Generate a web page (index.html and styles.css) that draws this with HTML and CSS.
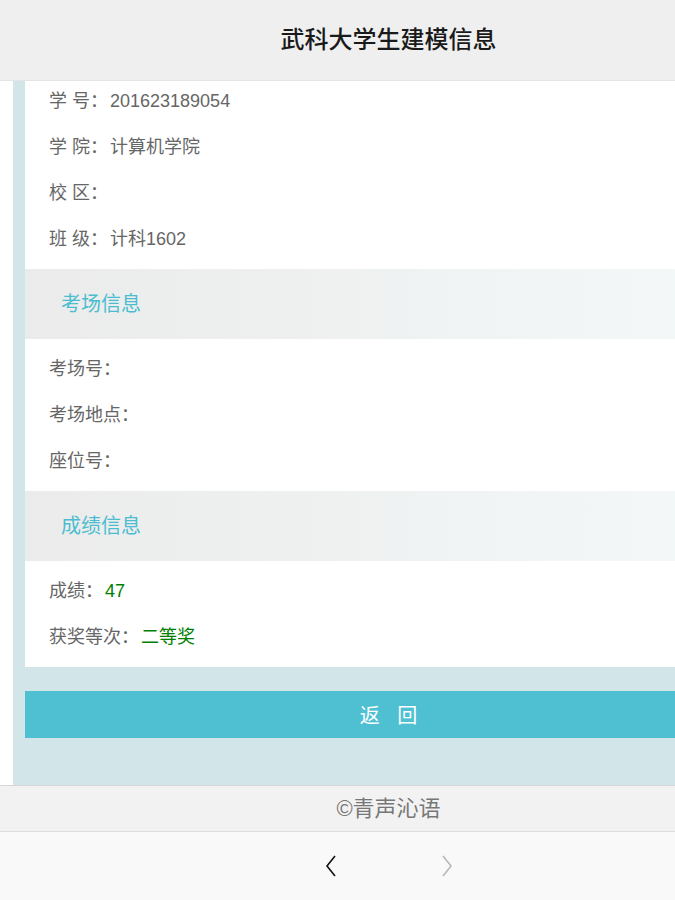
FILE: index.html
```html
<!DOCTYPE html>
<html lang="zh-CN">
<head>
    <meta charset="UTF-8">
    <meta name="viewport" content="width=device-width, initial-scale=1.0">
    <title>武科大学生建模信息</title>
    <link rel="stylesheet" href="styles.css">
</head>
<body>

    <div class="page">
        <!-- Fixed top bar -->
        <header class="top-bar">武科大学生建模信息</header>

        <div class="main">
            <div class="card">
                <div class="group">
                    <div class="row"><span class="label">学 号：</span>201623189054</div>
                    <div class="row"><span class="label">学 院：</span>计算机学院</div>
                    <div class="row"><span class="label">校 区：</span></div>
                    <div class="row"><span class="label">班 级：</span>计科1602</div>
                </div>

                <div class="section-title">考场信息</div>
                <div class="group">
                    <div class="row"><span class="label">考场号：</span></div>
                    <div class="row"><span class="label">考场地点：</span></div>
                    <div class="row"><span class="label">座位号：</span></div>
                </div>

                <div class="section-title">成绩信息</div>
                <div class="group">
                    <div class="row"><span class="label">成绩：</span><span class="good">47</span></div>
                    <div class="row"><span class="label">获奖等次：</span><span class="good">二等奖</span></div>
                </div>
            </div>

            <button class="back-btn" type="button">返 回</button>
        </div>

        <footer class="footer">©青声沁语</footer>

        <!-- Browser toolbar -->
        <div class="nav-bar">
            <svg class="nav-arrow" width="12" height="22" viewBox="0 0 12 22">
                <polyline points="10,1 2,11 10,21" fill="none" stroke="#111" stroke-width="1.6"/>
            </svg>
            <svg class="nav-arrow" width="12" height="22" viewBox="0 0 12 22">
                <polyline points="2,1 10,11 2,21" fill="none" stroke="#b8b8bc" stroke-width="1.6"/>
            </svg>
        </div>
    </div>

</body>
</html>
```

FILE: styles.css
```css
html, body {
    margin: 0;
    overflow: hidden;
}

body {
    background-color: #FFFFFF;
    font-family: "Liberation Sans", "Noto Sans CJK SC", sans-serif;
    color: #666;
}

.page {
    width: 777px;
    padding-top: 71px;
}

.top-bar {
    position: fixed;
    top: 0;
    left: 0;
    width: 777px;
    height: 80px;
    line-height: 80px;
    background-color: #efefef;
    border-bottom: 1px solid #e4e4e4;
    text-align: center;
    font-size: 24px;
    font-weight: 500;
    color: #1a1a1a;
    z-index: 10;
}

.main {
    margin: 0 13px;
    padding: 0 12px;
    background-color: #d2e5e9;
    padding-bottom: 47px;
}

.card {
    background-color: white;
    margin-bottom: 24px;
}

.group {
    padding: 7px 0;
}

.row {
    height: 46px;
    line-height: 46px;
    padding-left: 24px;
    font-size: 18px;
    color: #666;
}

.label {
    margin-right: 2px;
}

.good {
    color: #008000;
}

.section-title {
    height: 70px;
    line-height: 70px;
    padding-left: 36px;
    font-size: 20px;
    color: #4bbdd0;
    background: linear-gradient(90deg, #ebebeb, #f4f9f9);
}

.back-btn {
    display: block;
    width: 100%;
    height: 47px;
    border: none;
    background-color: #4fbfd2;
    color: white;
    font-family: "Liberation Sans", "Noto Sans CJK SC", sans-serif;
    font-size: 20px;
    word-spacing: 12px;
    cursor: pointer;
}

.footer {
    height: 45px;
    line-height: 45px;
    border-top: 1px solid #d6d6d6;
    background-color: #f2f2f2;
    text-align: center;
    font-size: 22px;
    color: #777;
}

.nav-bar {
    height: 68px;
    border-top: 1px solid #dedede;
    background-color: #f9f9fa;
    display: flex;
    justify-content: center;
    align-items: center;
    gap: 104px;
}
```
